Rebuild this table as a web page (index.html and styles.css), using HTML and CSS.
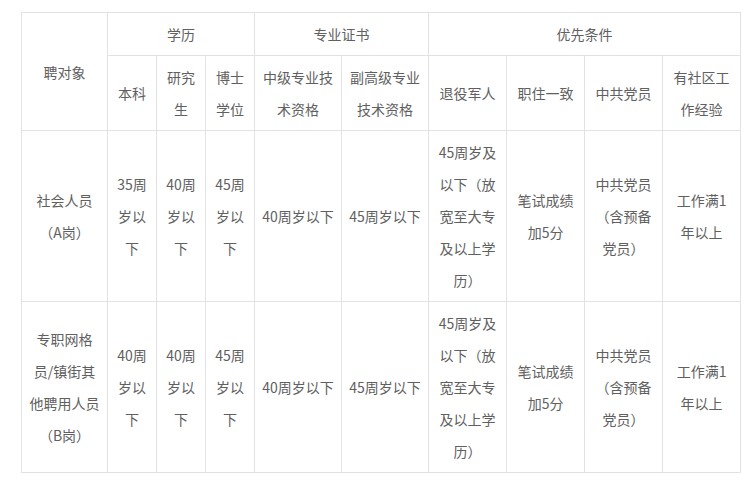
FILE: index.html
```html
<!DOCTYPE html>
<html lang="zh-CN">
<head>
<meta charset="utf-8">
<title>聘用条件</title>
<link rel="stylesheet" href="styles.css">
</head>
<body>
<div class="page">
<table class="grid">
  <colgroup>
    <col class="c-target">
    <col class="c-narrow">
    <col class="c-narrow">
    <col class="c-narrow">
    <col class="c-wide">
    <col class="c-wide">
    <col class="c-mid">
    <col class="c-mid">
    <col class="c-mid">
    <col class="c-mid">
  </colgroup>
  <tr>
    <td rowspan="2">聘对象</td>
    <td colspan="3">学历</td>
    <td colspan="2">专业证书</td>
    <td colspan="4">优先条件</td>
  </tr>
  <tr>
    <td>本科</td>
    <td>研究<br>生</td>
    <td>博士<br>学位</td>
    <td>中级专业技<br>术资格</td>
    <td>副高级专业<br>技术资格</td>
    <td>退役军人</td>
    <td>职住一致</td>
    <td>中共党员</td>
    <td>有社区工<br>作经验</td>
  </tr>
  <tr class="body-row">
    <td>社会人员<br>（A岗）</td>
    <td>35周<br>岁以<br>下</td>
    <td>40周<br>岁以<br>下</td>
    <td>45周<br>岁以<br>下</td>
    <td>40周岁以下</td>
    <td>45周岁以下</td>
    <td>45周岁及<br>以下（放<br>宽至大专<br>及以上学<br>历）</td>
    <td>笔试成绩<br>加5分</td>
    <td>中共党员<br>（含预备<br>党员）</td>
    <td>工作满1<br>年以上</td>
  </tr>
  <tr class="body-row">
    <td>专职网格<br>员/镇街其<br>他聘用人员<br>（B岗）</td>
    <td>40周<br>岁以<br>下</td>
    <td>40周<br>岁以<br>下</td>
    <td>45周<br>岁以<br>下</td>
    <td>40周岁以下</td>
    <td>45周岁以下</td>
    <td>45周岁及<br>以下（放<br>宽至大专<br>及以上学<br>历）</td>
    <td>笔试成绩<br>加5分</td>
    <td>中共党员<br>（含预备<br>党员）</td>
    <td>工作满1<br>年以上</td>
  </tr>
</table>
</div>
</body>
</html>
```

FILE: styles.css
```css
html, body {
  margin: 0;
  padding: 0;
  background: #ffffff;
}

.page {
  padding: 12px 0 0 21px;
}

.grid {
  border-collapse: collapse;
  table-layout: fixed;
  width: 720px;
  font-family: "Noto Sans CJK SC", "Microsoft YaHei", sans-serif;
  font-size: 14px;
  line-height: 32px;
  color: #606060;
}

.grid td {
  border: 1px solid #e2e2e2;
  padding: 5px 0;
  text-align: center;
  vertical-align: middle;
  white-space: nowrap;
  overflow: hidden;
}

.c-target { width: 86px; }
.c-narrow { width: 49px; }
.c-wide { width: 87px; }
.c-mid { width: 78px; }
```
